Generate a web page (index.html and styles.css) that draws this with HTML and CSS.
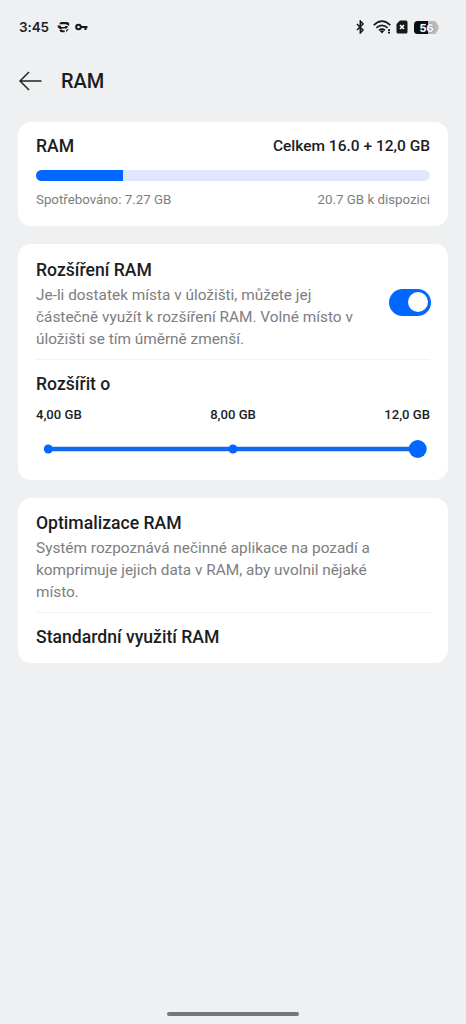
FILE: index.html
```html
<!DOCTYPE html>
<html lang="cs">
<head>
<meta charset="utf-8">
<title>RAM</title>
<link rel="stylesheet" href="styles.css">
</head>
<body>
<div class="screen">
  <div class="status">
    <span class="time">3:45</span>
    <svg class="icon-vpn" width="13" height="12" viewBox="0 0 13 12"><path d="M4.500 1H9.800Q12.300 1 12.300 3.700L11.500 5Q10.500 3.300 8.500 3.300H2.200Q2.800 1 4.500 1zM.5 4.600H3.500L4.300 6H7.600L8.300 5H10.800L10 7.400H5.200L3.800 8.300Q.8 7.800.5 4.600zM2.300 9L4.800 8.500 6 9.600H8L7.500 11.300H5Q3 11.300 2.300 9zM9 9.200L11.500 7.400 11 9.200 9 10.900z" fill="#171819"/></svg>
    <svg class="icon-key" width="13" height="8" viewBox="0 0 13 8"><circle cx="3.500" cy="4" r="2.300" fill="none" stroke="#171819" stroke-width="2"/><path d="M5.500 4H12.500M10.500 4v3" fill="none" stroke="#171819" stroke-width="2.200"/></svg>
    <span class="spacer"></span>
    <svg class="icon-bt" width="9" height="14" viewBox="0 0 9 14"><path d="M1 4l6 6-2.700 3V1L7 4l-6 6" fill="none" stroke="#171819" stroke-width="1.500"/></svg>
    <svg class="icon-wifi" width="19" height="14" viewBox="0 0 19 14"><path d="M.7 5.200Q9 -2.800 17.300 5.200M3.400 7.800Q9 2.800 14.600 7.800M6 10.300Q9 7.800 12 10.300" fill="none" stroke="#171819" stroke-width="1.600"/><path d="M6.800 11Q9 9.600 11.200 11L9 13.500z" fill="#171819"/><path d="M15 9.200h2v1.700h-2zM15 11.800h2v1.700h-2z" fill="#171819"/></svg>
    <svg class="icon-sim" width="12" height="14" viewBox="0 0 12 14"><path d="M4 .5H10Q11.500.5 11.500 2V12Q11.500 13.500 10 13.500H2Q.5 13.500.5 12V4z" fill="#171819"/><path d="M4 5l4 4M8 5l-4 4" stroke="#fff" stroke-width="1.700"/></svg>
    <svg class="battery" width="25" height="13" viewBox="0 0 25 13"><path d="M14 0H20.500Q22.500 0 23 2.500L24.500 5V8L23 10.500Q22.500 13 20.500 13H14z" fill="#b7b9bb"/><path d="M3.500 0H14V13H3.500Q0 13 0 9.500V3.500Q0 0 3.500 0z" fill="#0c0d0e"/><text class="battery-level" x="12.500" y="10.500" text-anchor="middle">56</text></svg>
  </div>
  <header class="header">
    <svg width="23" height="20" viewBox="0 0 23 20"><path d="M22.500 10H1M10 1L1 10l9 9" fill="none" stroke="#222" stroke-width="1.500"/></svg>
    <h1>RAM</h1>
  </header>
  <main class="cards">
    <section class="card usage">
      <div class="row"><h2>RAM</h2><span class="total">Celkem 16.0 + 12,0 GB</span></div>
      <div class="bar"><div class="fill"></div></div>
      <div class="row small"><span>Spotřebováno: 7.27 GB</span><span>20.7 GB k dispozici</span></div>
    </section>
    <section class="card extend">
      <div class="setting">
        <div>
          <h2>Rozšíření RAM</h2>
          <p>Je-li dostatek místa v úložišti, můžete jej<br>částečně využít k rozšíření RAM. Volné místo v<br>úložišti se tím úměrně zmenší.</p>
        </div>
        <div class="toggle"><div class="knob"></div></div>
      </div>
      <div class="divider"></div>
      <h2>Rozšířit o</h2>
      <div class="row labels"><span>4,00 GB</span><span>8,00 GB</span><span>12,0 GB</span></div>
      <svg class="slider" width="394" height="20" viewBox="0 0 394 20"><path d="M12 10H382" stroke="#146aee" stroke-width="4.500"/><g fill="#0167fe"><circle cx="12.300" cy="10" r="4.500"/><circle cx="197" cy="10" r="4.500"/><circle cx="381.700" cy="10" r="9"/></g></svg>
    </section>
    <section class="card optimize">
      <h2>Optimalizace RAM</h2>
      <p>Systém rozpoznává nečinné aplikace na pozadí a<br>komprimuje jejich data v RAM, aby uvolnil nějaké<br>místo.</p>
      <div class="divider"></div>
      <h2>Standardní využití RAM</h2>
    </section>
  </main>
  <div class="home"></div>
</div>
</body>
</html>
```
FILE: styles.css
```css
* { box-sizing: border-box; }
body { margin: 0; font-family: Roboto, sans-serif; background: #eef0f2; color: #1c1d1f; }
svg { display: block; flex: none; }
.screen { height: 1024px; display: flex; flex-direction: column; }
.status { display: flex; align-items: center; height: 54px; padding: 0 27px 0 19px; }
.time { width: 38px; font: 600 13.500px/20px Inter, sans-serif; letter-spacing: -.1px; white-space: nowrap; }
.icon-key { margin-left: 5px; }
.spacer { flex: 1; }
.icon-wifi { margin-left: 8px; }
.icon-sim { margin-left: 4px; }
.battery { margin-left: 6px; }
.battery-level { font: 700 11px Inter, sans-serif; fill: #fff; stroke: #55575a; stroke-width: .5px; paint-order: stroke; }
.header { display: flex; align-items: center; height: 54px; padding-left: 19px; gap: 19px; }
h1 { margin: 0; font-size: 20px; font-weight: 500; line-height: 24px; }
.cards { display: flex; flex-direction: column; gap: 18px; padding: 14px 18px 0; }
.card { padding: 0 18px; background: #fff; border-radius: 13px; }
.usage { height: 103.500px; padding-top: 11.500px; }
.row { display: flex; justify-content: space-between; align-items: center; }
h2 { margin: 0; font-size: 17.600px; font-weight: 500; line-height: 24px; }
.total { font-size: 15.500px; font-weight: 500; }
.bar { height: 11px; margin: 12.500px 0 10px; border-radius: 6px; overflow: hidden; background: #dfe8fe; }
.fill { width: 86.500px; height: 100%; background: #0167fe; }
.small { font-size: 13.300px; line-height: 18px; color: #7d7e80; }
.extend { height: 236px; padding-top: 14px; }
.setting { display: flex; justify-content: space-between; }
p { margin: 2px 0 0; font-size: 15.380px; line-height: 22px; color: #7d7e80; white-space: nowrap; }
.toggle { display: flex; align-items: center; justify-content: flex-end; width: 42px; height: 27px; margin: 31px -1px 0 0; padding-right: 3px; border-radius: 14px; background: #0167fe; }
.knob { width: 20px; height: 20px; border-radius: 50%; background: #fff; }
.divider { height: 1px; margin: 9.500px 0 12px; background: #f2f2f3; }
.labels { margin-top: 9px; font-size: 13.100px; line-height: 20px; font-weight: 500; }
.slider { margin-top: 14px; }
.optimize { height: 165px; padding-top: 13px; }
.home { width: 132px; height: 4px; margin: auto auto 8px; border-radius: 2px; background: #76777a; }
```
